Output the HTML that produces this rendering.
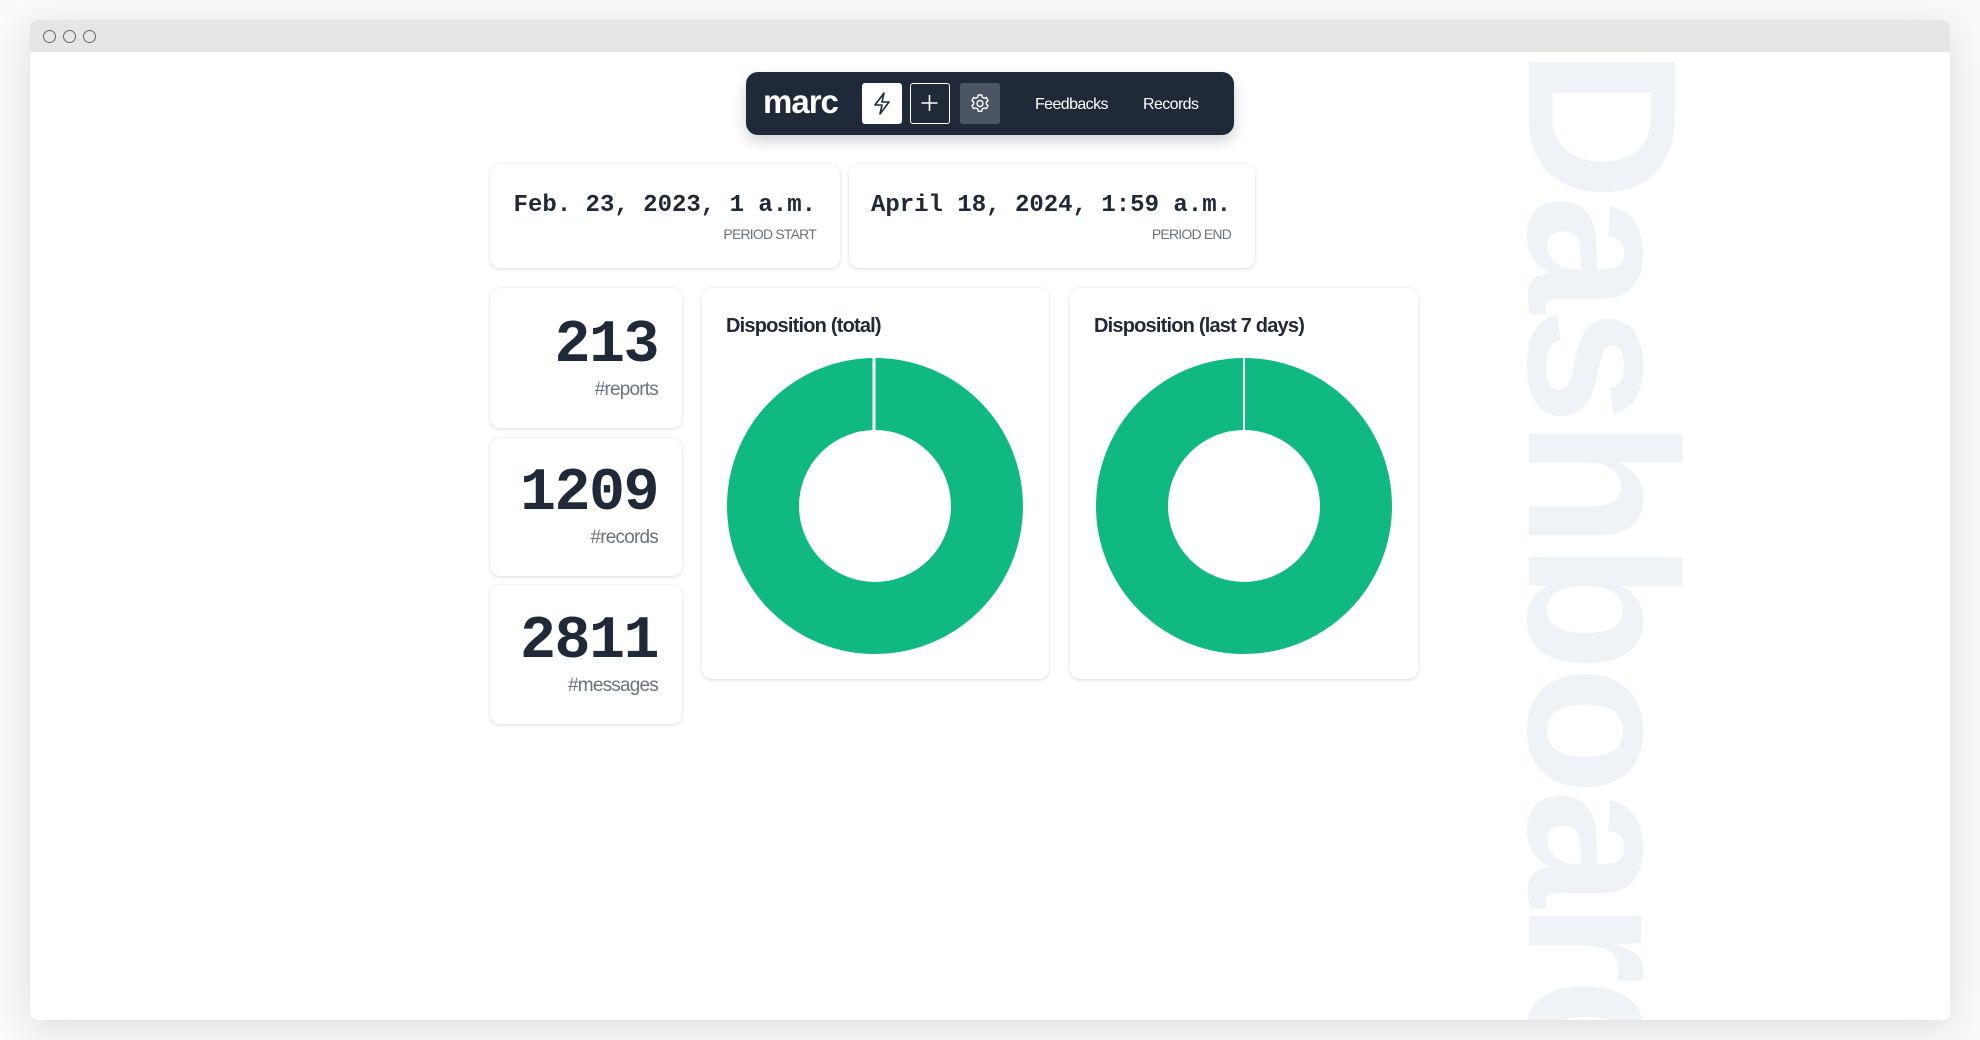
<!DOCTYPE html>
<html><head><meta charset="utf-8"><style>
*{box-sizing:border-box;margin:0;padding:0}
html,body{overflow:hidden}
body{width:1980px;height:1040px;background:#fafafa;position:relative;font-family:"Liberation Sans",sans-serif;color:#1f2937}
.win{position:absolute;left:30px;top:20px;width:1920px;height:1000px;background:#fff;border-radius:8px;box-shadow:0 8px 40px rgba(0,0,0,.12);overflow:hidden}
.bar{height:32px;background:#e6e6e6;position:relative}
.dot{position:absolute;top:10px;width:13px;height:13px;border:1.5px solid #666;border-radius:50%}
.wm{position:absolute;left:1466px;top:28px;writing-mode:vertical-rl;font-size:212px;font-weight:bold;color:#eff3f8;line-height:1;letter-spacing:-6px;white-space:nowrap}
.card{position:absolute;background:#fff;border-radius:10px;box-shadow:0 1px 4px rgba(0,0,0,.13),0 0 1px rgba(0,0,0,.08)}
.mono{font-family:"Liberation Mono","DejaVu Sans Mono",monospace;font-weight:bold;color:#1f2937}
.lbl{font-size:14px;color:#6b7280;letter-spacing:-.8px;text-align:right}
.num{position:absolute;right:24px;font-size:60px;letter-spacing:-1.5px}
.nl{position:absolute;right:24px;font-size:19px;color:#6b7280;letter-spacing:-.8px}
.nav{position:absolute;left:746px;top:72px;width:488px;height:63px;background:#1f2937;border-radius:12px;box-shadow:0 6px 14px rgba(0,0,0,.18)}
.btn{position:absolute;top:11px;width:40px;height:41px;border-radius:3px}
</style></head><body>
<div class="win">
 <div class="bar"><div class="dot" style="left:13px"></div><div class="dot" style="left:33px"></div><div class="dot" style="left:53px"></div></div>
 <div class="wm">Dashboard</div>
</div>
<div class="nav">
 <div style="position:absolute;left:17px;top:11px;font-size:33px;font-weight:bold;color:#fff;letter-spacing:-1px">marc</div>
 <div class="btn" style="left:116px;background:#fff"><svg width="40" height="41" viewBox="0 0 40 41"><path d="M22 10 L13 22 H20 L18 31 L27 19 H20 Z" fill="none" stroke="#1f2937" stroke-width="1.6" stroke-linejoin="round"/></svg></div>
 <div class="btn" style="left:164px;border:1.5px solid #fff"><svg width="37" height="38" viewBox="0 0 37 38"><path d="M18.5 11v16M10.5 19h16" stroke="#fff" stroke-width="1.6"/></svg></div>
 <div class="btn" style="left:214px;background:#4b5563"><svg width="40" height="41" viewBox="0 0 40 41"><g fill="none" stroke="#fff" stroke-width="1.4"><circle cx="20" cy="20.5" r="3"/><path d="M18.3 12h3.4l.6 2.2 1.8 1 2.2-.7 1.7 3-1.6 1.6v2l1.6 1.6-1.7 3-2.2-.7-1.8 1-.6 2.2h-3.4l-.6-2.2-1.8-1-2.2.7-1.7-3 1.6-1.6v-2l-1.6-1.6 1.7-3 2.2.7 1.8-1z"/></g></svg></div>
 <div style="position:absolute;left:289px;top:24px;font-size:16px;color:#fff;letter-spacing:-.6px">Feedbacks</div>
 <div style="position:absolute;left:397px;top:24px;font-size:16px;color:#fff;letter-spacing:-.6px">Records</div>
</div>
<div class="card" style="left:490px;top:164px;width:350px;height:104px">
 <div class="mono" style="position:absolute;right:24px;top:28px;font-size:24px">Feb. 23, 2023, 1 a.m.</div>
 <div class="lbl" style="position:absolute;right:24px;top:62px">PERIOD START</div>
</div>
<div class="card" style="left:849px;top:164px;width:406px;height:104px">
 <div class="mono" style="position:absolute;right:24px;top:28px;font-size:24px">April 18, 2024, 1:59 a.m.</div>
 <div class="lbl" style="position:absolute;right:24px;top:62px">PERIOD END</div>
</div>
<div class="card" style="left:490px;top:288px;width:192px;height:140px">
 <div class="mono num" style="top:24px">213</div>
 <div class="nl" style="top:91px">#reports</div>
</div>
<div class="card" style="left:490px;top:438px;width:192px;height:138px">
 <div class="mono num" style="top:22px">1209</div>
 <div class="nl" style="top:89px">#records</div>
</div>
<div class="card" style="left:490px;top:585px;width:192px;height:139px">
 <div class="mono num" style="top:23px">2811</div>
 <div class="nl" style="top:90px">#messages</div>
</div>
<div class="card" style="left:702px;top:288px;width:347px;height:391px">
 <div style="position:absolute;left:24px;top:27px;font-size:20px;font-weight:bold;letter-spacing:-.8px">Disposition (total)</div>
 <svg style="position:absolute;left:0;top:0" width="347" height="391"><circle cx="173" cy="218" r="112" fill="none" stroke="#10b981" stroke-width="72"/><path d="M172 69v74" stroke="#fff" stroke-width="3"/></svg>
</div>
<div class="card" style="left:1070px;top:288px;width:348px;height:391px">
 <div style="position:absolute;left:24px;top:27px;font-size:20px;font-weight:bold;letter-spacing:-.8px">Disposition (last 7 days)</div>
 <svg style="position:absolute;left:0;top:0" width="348" height="391"><circle cx="174" cy="218" r="112" fill="none" stroke="#10b981" stroke-width="72"/><path d="M174 69v74" stroke="#fff" stroke-width="2"/></svg>
</div>
</body></html>
